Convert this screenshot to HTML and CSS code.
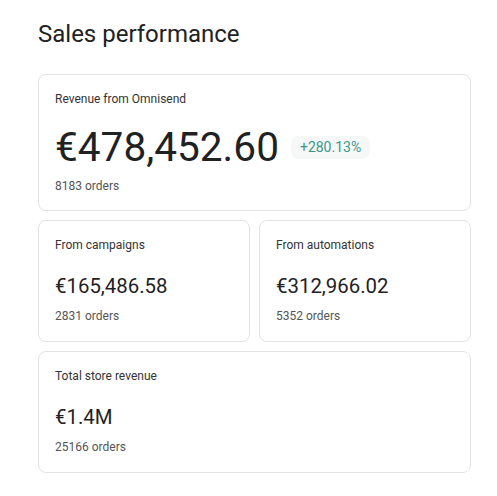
FILE: index.html
```html
<!DOCTYPE html>
<html lang="en">
<head>
    <meta charset="UTF-8">
    <meta name="viewport" content="width=device-width, initial-scale=1.0">
    <title>Sales performance</title>
    <link rel="stylesheet" href="styles.css">
</head>
<body>
    <div class="panel">
        <h2 class="panel-title">Sales performance</h2>

        <div class="card card-main">
            <div class="card-label">Revenue from Omnisend</div>
            <div class="value-row">
                <div class="value value-big">€478,452.60</div>
                <span class="badge">+280.13%</span>
            </div>
            <div class="orders">8183 orders</div>
        </div>

        <div class="card-row">
            <div class="card">
                <div class="card-label">From campaigns</div>
                <div class="value">€165,486.58</div>
                <div class="orders">2831 orders</div>
            </div>
            <div class="card">
                <div class="card-label">From automations</div>
                <div class="value">€312,966.02</div>
                <div class="orders">5352 orders</div>
            </div>
        </div>

        <div class="card">
            <div class="card-label">Total store revenue</div>
            <div class="value">€1.4M</div>
            <div class="orders">25166 orders</div>
        </div>
    </div>
</body>
</html>
```

FILE: styles.css
```css
body {
    font-family: Roboto, "Noto Sans", Arial, sans-serif;
    background-color: #ffffff;
    color: #222222;
    margin: 0;
}
.panel {
    width: 433px;
    padding: 18px 0 0 38px;
    display: flex;
    flex-direction: column;
    gap: 9px;
}
.panel-title {
    font-size: 24px;
    font-weight: 400;
    line-height: 32px;
    margin: 0 0 15px 0;
    color: #222222;
}
.card {
    border: 1px solid #e3e3e3;
    border-radius: 8px;
    padding: 16px 16px 17px 16px;
    flex: 1;
}
.card-main {
    padding-bottom: 16px;
}
.card-label {
    font-size: 12px;
    line-height: 16px;
    color: #333333;
}
.value-row {
    display: flex;
    align-items: center;
    gap: 12px;
    margin-top: 16px;
}
.value {
    font-size: 20.4px;
    line-height: 28px;
    font-weight: 400;
    margin-top: 19px;
    color: #1f2222;
}
.value-big {
    font-size: 40.6px;
    line-height: 49px;
    margin-top: 0;
}
.badge {
    font-size: 14px;
    line-height: 23px;
    padding: 0 9px;
    border-radius: 8px;
    background-color: #f6f7f7;
    color: #3b978c;
}
.orders {
    font-size: 12px;
    line-height: 16px;
    color: #555555;
    margin-top: 8px;
}
.card-main .orders {
    margin-top: 6px;
}
.card-row {
    display: flex;
    gap: 9px;
}
```
